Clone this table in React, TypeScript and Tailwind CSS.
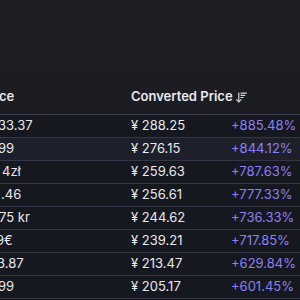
import { ArrowDownWideNarrow } from "lucide-react";

type Row = { price: string; shift: string; converted: string; diff: string };

const rows: Row[] = [
  { price: "33.37", shift: "-ml-[2px]", converted: "¥ 288.25", diff: "+885.48%" },
  { price: "99", shift: "-ml-[2px]", converted: "¥ 276.15", diff: "+844.12%" },
  { price: "4zł", shift: "ml-[2px]", converted: "¥ 259.63", diff: "+787.63%" },
  { price: ".46", shift: "ml-[1px]", converted: "¥ 256.61", diff: "+777.33%" },
  { price: "75 kr", shift: "-ml-[1px]", converted: "¥ 244.62", diff: "+736.33%" },
  { price: "9€", shift: "-ml-[4px]", converted: "¥ 239.21", diff: "+717.85%" },
  { price: "3.87", shift: "-ml-[3px]", converted: "¥ 213.47", diff: "+629.84%" },
  { price: "99", shift: "-ml-[2px]", converted: "¥ 205.17", diff: "+601.45%" },
];

export default function App() {
  return (
    <div className="h-[300px] w-[300px] overflow-hidden bg-gradient-to-b from-[#1f1f23] via-[#1a1b22] to-[#171920] font-['Inter',sans-serif] text-[13px] text-[#e8e9ee]">
      <div className="h-[80px]" />
      <div className="grid h-[35px] grid-cols-[131px_100px_69px] items-center border-b border-[#3a3d49] font-semibold">
        <div className="-ml-[1px] overflow-hidden whitespace-nowrap">ce</div>
        <div className="col-span-2 flex items-center gap-[2px] whitespace-nowrap">
          <span>Converted Price</span>
          <ArrowDownWideNarrow size={13} strokeWidth={2.2} className="text-[#d4d6de]" />
        </div>
      </div>
      {rows.map((r, i) => (
        <div
          key={i}
          className={`grid h-[23px] grid-cols-[131px_100px_69px] items-center border-b border-[#343743] ${
            i === 1 ? "bg-[#1d202b]" : "bg-[#16181f]"
          }`}
        >
          <div className="overflow-hidden whitespace-nowrap">
            <span className={`block ${r.shift}`}>{r.price}</span>
          </div>
          <div className="whitespace-nowrap">{r.converted}</div>
          <div className="whitespace-nowrap text-[#8b80f5]">{r.diff}</div>
        </div>
      ))}
    </div>
  );
}
